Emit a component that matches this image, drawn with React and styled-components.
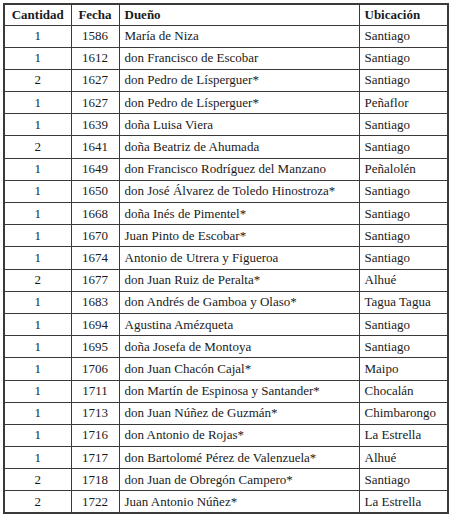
import React from "react";
import styled, { createGlobalStyle } from "styled-components";

const GlobalStyle = createGlobalStyle`
  html, body {
    margin: 0;
    padding: 0;
    background: #fff;
  }
  body {
    font-family: "Liberation Serif", "DejaVu Serif", serif;
    color: #1a1a1a;
  }
`;

const Page = styled.div`
  padding: 3px 0 0 3px;
`;

const Table = styled.table`
  border-collapse: collapse;
  width: 444px;
  table-layout: fixed;
  border: 2px solid #3a3a3a;
  font-size: 13px;
`;

const Col = styled.col`
  width: ${(p) => p.$w}px;
`;

const Row = styled.tr`
  height: ${(p) => (p.$head ? 21 : 22.2)}px;
`;

const Head = styled.th`
  border: 1px solid #3a3a3a;
  font-weight: bold;
  padding: 0 5px;
  text-align: ${(p) => p.$align || "left"};
  white-space: nowrap;
`;

const Cell = styled.td`
  border: 1px solid #3a3a3a;
  padding: 0 5px;
  text-align: ${(p) => p.$align || "left"};
  white-space: nowrap;
`;

const rows = [
  ["1", "1586", "María de Niza", "Santiago"],
  ["1", "1612", "don Francisco de Escobar", "Santiago"],
  ["2", "1627", "don Pedro de Lísperguer*", "Santiago"],
  ["1", "1627", "don Pedro de Lísperguer*", "Peñaflor"],
  ["1", "1639", "doña Luisa Viera", "Santiago"],
  ["2", "1641", "doña Beatriz de Ahumada", "Santiago"],
  ["1", "1649", "don Francisco Rodríguez del Manzano", "Peñalolén"],
  ["1", "1650", "don José Álvarez de Toledo Hinostroza*", "Santiago"],
  ["1", "1668", "doña Inés de Pimentel*", "Santiago"],
  ["1", "1670", "Juan Pinto de Escobar*", "Santiago"],
  ["1", "1674", "Antonio de Utrera y Figueroa", "Santiago"],
  ["2", "1677", "don Juan Ruiz de Peralta*", "Alhué"],
  ["1", "1683", "don Andrés de Gamboa y Olaso*", "Tagua Tagua"],
  ["1", "1694", "Agustina Amézqueta", "Santiago"],
  ["1", "1695", "doña Josefa de Montoya", "Santiago"],
  ["1", "1706", "don Juan Chacón Cajal*", "Maipo"],
  ["1", "1711", "don Martín de Espinosa y Santander*", "Chocalán"],
  ["1", "1713", "don Juan Núñez de Guzmán*", "Chimbarongo"],
  ["1", "1716", "don Antonio de Rojas*", "La Estrella"],
  ["1", "1717", "don Bartolomé Pérez de Valenzuela*", "Alhué"],
  ["2", "1718", "don Juan de Obregón Campero*", "Santiago"],
  ["2", "1722", "Juan Antonio Núñez*", "La Estrella"],
];

export default function App() {
  return (
    <Page>
      <GlobalStyle />
      <Table>
        <colgroup>
          <Col $w={67} />
          <Col $w={48} />
          <Col $w={240} />
          <Col $w={89} />
        </colgroup>
        <thead>
          <Row $head>
            <Head $align="center">Cantidad</Head>
            <Head $align="center">Fecha</Head>
            <Head>Dueño</Head>
            <Head>Ubicación</Head>
          </Row>
        </thead>
        <tbody>
          {rows.map(([qty, year, owner, place], i) => (
            <Row key={i}>
              <Cell $align="center">{qty}</Cell>
              <Cell $align="center">{year}</Cell>
              <Cell>{owner}</Cell>
              <Cell>{place}</Cell>
            </Row>
          ))}
        </tbody>
      </Table>
    </Page>
  );
}
